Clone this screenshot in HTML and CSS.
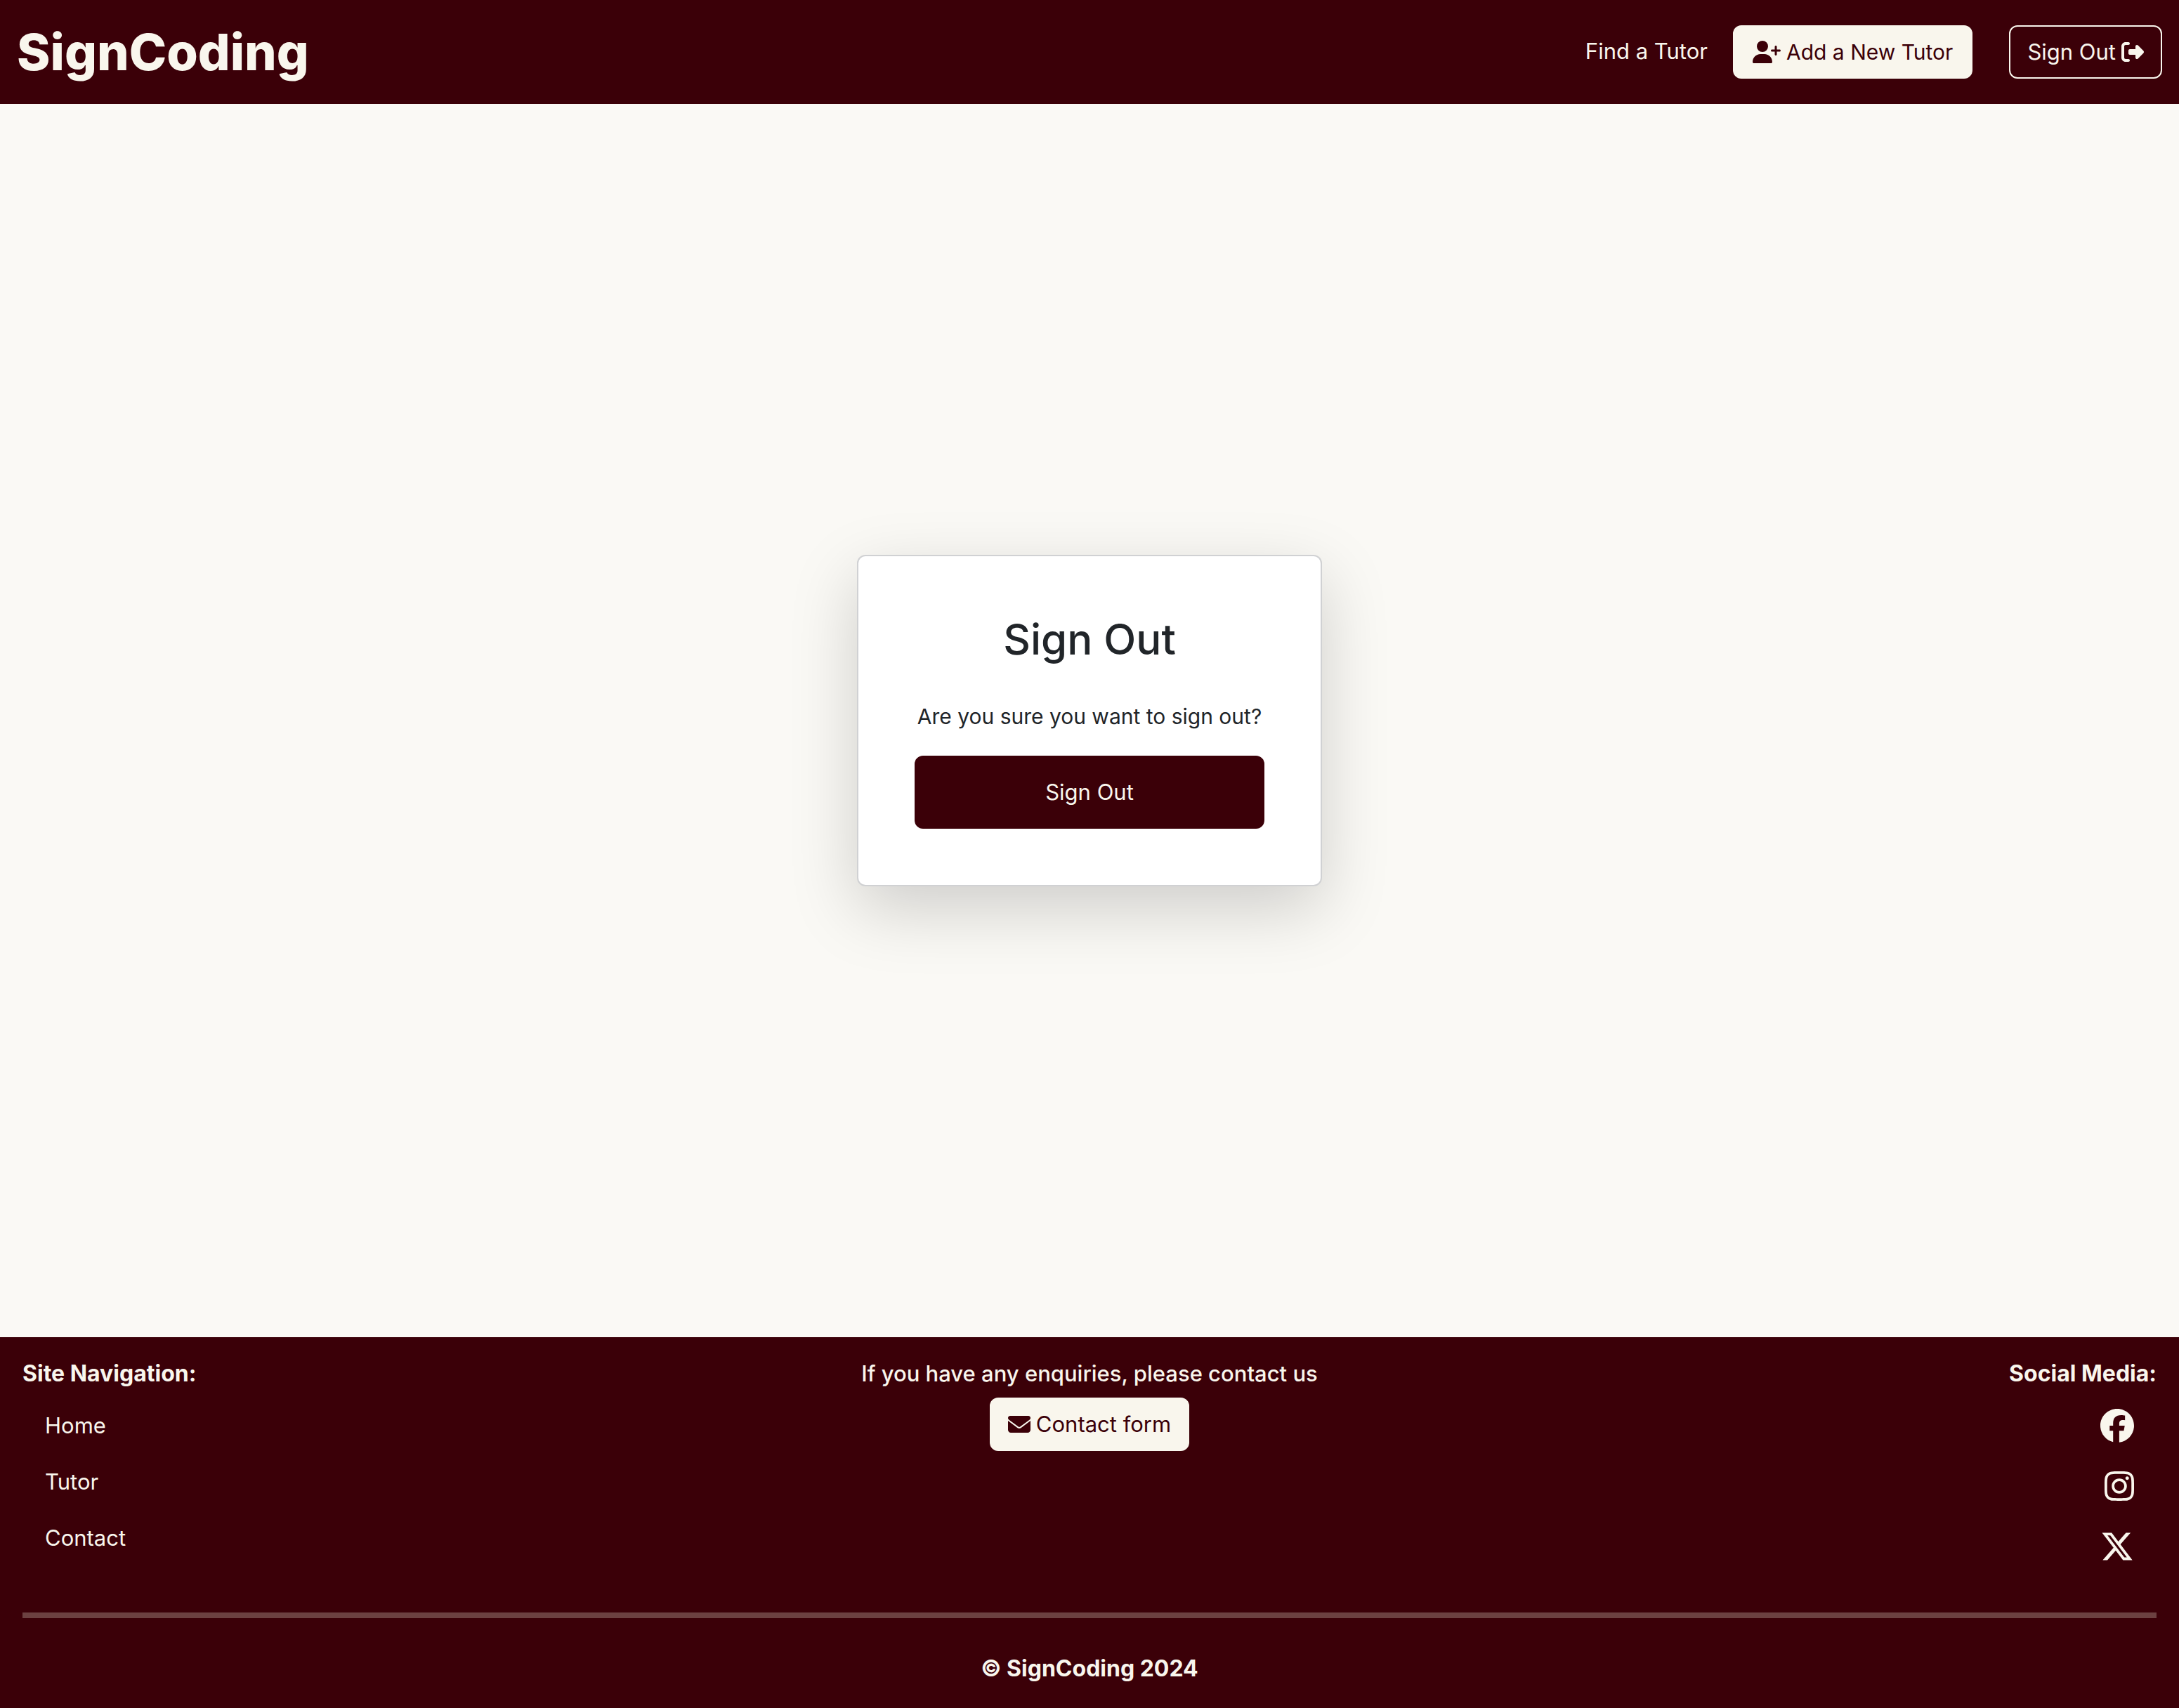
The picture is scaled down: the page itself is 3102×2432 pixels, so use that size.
FILE: index.html
```html
<!DOCTYPE html>
<html lang="en">
<head>
  <meta charset="utf-8">
  <title>Sign Out - SignCoding</title>
  <meta name="viewport" content="width=device-width, initial-scale=1">
  <link rel="stylesheet" href="styles.css">
</head>
<body>
  <header class="site-header">
    <a class="brand" href="#">SignCoding</a>
    <nav class="main-nav" aria-label="Main">
      <a class="nav-link" href="#">Find a Tutor</a>
      <a class="btn btn-light btn-add" href="#">
        <svg class="icon icon-wide" viewBox="0 0 640 512" aria-hidden="true"><path d="M96 128a128 128 0 1 1 256 0A128 128 0 1 1 96 128zM0 482.3C0 383.8 79.8 304 178.3 304h91.4C368.2 304 448 383.8 448 482.3c0 16.4-13.3 29.7-29.7 29.7H29.7C13.3 512 0 498.7 0 482.3zM504 312V248H440c-13.3 0-24-10.7-24-24s10.7-24 24-24h64V136c0-13.3 10.7-24 24-24s24 10.7 24 24v64h64c13.3 0 24 10.7 24 24s-10.7 24-24 24H552v64c0 13.3-10.7 24-24 24s-24-10.7-24-24z"/></svg>
        <span>Add a New Tutor</span>
      </a>
      <a class="btn btn-outline" href="#">
        <span>Sign Out</span>
        <svg class="icon" viewBox="0 0 512 512" aria-hidden="true"><path d="M377.9 105.9L500.7 228.7c7.2 7.2 11.3 17.1 11.3 27.3s-4.1 20.1-11.3 27.3L377.9 406.1c-6.4 6.4-15 9.9-24 9.9c-18.7 0-33.9-15.2-33.9-33.9l0-62.1-128 0c-17.7 0-32-14.3-32-32l0-64c0-17.7 14.3-32 32-32l128 0 0-62.1c0-18.7 15.2-33.9 33.9-33.9c9 0 17.6 3.6 24 9.9zM160 96L96 96c-17.7 0-32 14.3-32 32l0 256c0 17.7 14.3 32 32 32l64 0c17.7 0 32 14.3 32 32s-14.3 32-32 32l-64 0c-53 0-96-43-96-96L0 128C0 75 43 32 96 32l64 0c17.7 0 32 14.3 32 32s-14.3 32-32 32z"/></svg>
      </a>
    </nav>
  </header>

  <main class="content">
    <form class="card">
      <h1 class="card-title">Sign Out</h1>
      <p class="card-text">Are you sure you want to sign out?</p>
      <button class="btn-submit" type="button">Sign Out</button>
    </form>
  </main>

  <footer class="site-footer">
    <div class="footer-columns">
      <nav class="footer-col" aria-label="Site navigation">
        <h2 class="footer-title">Site Navigation:</h2>
        <ul class="link-list">
          <li><a href="#">Home</a></li>
          <li><a href="#">Tutor</a></li>
          <li><a href="#">Contact</a></li>
        </ul>
      </nav>
      <div class="footer-col footer-contact">
        <p class="footer-text">If you have any enquiries, please contact us</p>
        <a class="btn btn-light" href="#">
          <svg class="icon" viewBox="0 0 512 512" aria-hidden="true"><path d="M48 64C21.5 64 0 85.5 0 112c0 15.1 7.1 29.3 19.2 38.4L236.8 313.6c11.4 8.5 27 8.5 38.4 0L492.8 150.4c12.1-9.1 19.2-23.3 19.2-38.4c0-26.5-21.5-48-48-48H48zM0 176V384c0 35.3 28.7 64 64 64H448c35.3 0 64-28.7 64-64V176L294.4 339.2c-22.8 17.1-54 17.1-76.8 0L0 176z"/></svg>
          <span>Contact form</span>
        </a>
      </div>
      <div class="footer-col footer-social">
        <h2 class="footer-title">Social Media:</h2>
        <ul class="social-list">
          <li><a href="#" aria-label="Facebook"><svg class="social-icon" viewBox="0 0 512 512" aria-hidden="true"><path d="M512 256C512 114.6 397.4 0 256 0S0 114.6 0 256C0 376 82.7 476.8 194.2 504.5V334.2H141.4V256h52.8V222.3c0-87.1 39.4-127.5 125-127.5c16.2 0 44.2 3.2 55.7 6.4V172c-6-.6-16.5-1-29.6-1c-42 0-58.2 15.9-58.2 57.2V256h83.6l-14.4 78.2H287V510.1C413.8 494.8 512 386.9 512 256h0z"/></svg></a></li>
          <li><a href="#" aria-label="Instagram"><svg class="social-icon" viewBox="0 0 448 512" aria-hidden="true"><path d="M224.1 141c-63.6 0-114.9 51.3-114.9 114.9s51.3 114.9 114.9 114.9S339 319.5 339 255.9 287.7 141 224.1 141zm0 189.6c-41.1 0-74.7-33.5-74.7-74.7s33.5-74.7 74.7-74.7 74.7 33.5 74.7 74.7-33.6 74.7-74.7 74.7zm146.4-194.3c0 14.9-12 26.8-26.8 26.8-14.9 0-26.8-12-26.8-26.8s12-26.8 26.8-26.8 26.8 12 26.8 26.8zm76.1 27.2c-1.7-35.9-9.9-67.7-36.2-93.9-26.2-26.2-58-34.4-93.9-36.2-37-2.1-147.9-2.1-184.9 0-35.8 1.7-67.6 9.9-93.9 36.1s-34.4 58-36.2 93.9c-2.1 37-2.1 147.9 0 184.9 1.7 35.9 9.9 67.7 36.2 93.9s58 34.4 93.9 36.2c37 2.1 147.9 2.1 184.9 0 35.9-1.7 67.7-9.9 93.9-36.2 26.2-26.2 34.4-58 36.2-93.9 2.1-37 2.1-147.8 0-184.8zM398.8 388c-7.8 19.6-22.9 34.7-42.6 42.6-29.5 11.7-99.5 9-132.1 9s-102.7 2.6-132.1-9c-19.6-7.8-34.7-22.9-42.6-42.6-11.7-29.5-9-99.5-9-132.1s-2.6-102.7 9-132.1c7.8-19.6 22.9-34.7 42.6-42.6 29.5-11.7 99.5-9 132.1-9s102.7-2.6 132.1 9c19.6 7.8 34.7 22.9 42.6 42.6 11.7 29.5 9 99.5 9 132.1s2.7 102.7-9 132.1z"/></svg></a></li>
          <li><a href="#" aria-label="X"><svg class="social-icon" viewBox="0 0 512 512" aria-hidden="true"><path d="M389.2 48h70.6L305.6 224.2 487 464H345L233.7 318.6 106.5 464H35.8L200.7 275.5 26.8 48H172.4L272.9 180.9 389.2 48zM364.4 421.8h39.1L151.1 88h-42L364.4 421.8z"/></svg></a></li>
        </ul>
      </div>
    </div>
    <hr class="divider">
    <p class="copyright">© SignCoding 2024</p>
  </footer>
</body>
</html>
```
FILE: styles.css
```css
:root {
  --maroon: #3b0008;
  --cream: #f9f6ed;
  --page: #faf9f5;
  --ink: #212529;
}

* {
  box-sizing: border-box;
}

body {
  display: flex;
  flex-direction: column;
  min-height: 100vh;
  margin: 0;
  background: var(--page);
  color: var(--ink);
  font-family: Inter, "Liberation Sans", sans-serif;
  font-size: 31px;
  line-height: 48px;
}

a {
  color: inherit;
  text-decoration: none;
}

h1, h2, p, ul {
  margin: 0;
  padding: 0;
}

ul {
  list-style: none;
}

/* Header */
.site-header {
  display: flex;
  align-items: center;
  justify-content: space-between;
  padding: 36px 24px;
  background: var(--maroon);
  color: var(--cream);
}

.brand {
  font-size: 72px;
  font-weight: 800;
  line-height: 76px;
}

.main-nav {
  display: flex;
  align-items: center;
}

.nav-link {
  padding: 0 36px 2px;
}

/* Buttons */
.btn {
  display: inline-flex;
  align-items: center;
  gap: 8px;
  padding: 12px 24px;
  border: 2px solid var(--cream);
  border-radius: 12px;
  white-space: nowrap;
}

.btn-light {
  background: var(--cream);
  color: var(--maroon);
}

.btn-add {
  margin-right: 52px;
  padding: 12px 26px;
  font-size: 30px;
}

.icon {
  width: 32px;
  height: 32px;
  fill: currentColor;
}

.icon-wide {
  width: 40px;
}

/* Sign out card */
.content {
  display: flex;
  flex: 1;
  align-items: center;
  justify-content: center;
}

.card {
  display: flex;
  flex-direction: column;
  min-width: 662px;
  padding: 80px;
  border: 2px solid #d0d1d3;
  border-radius: 12px;
  background: #fff;
  box-shadow: 0 32px 96px rgba(0, 0, 0, 0.175);
  text-align: center;
}

.card-title {
  margin-bottom: 48px;
  font-size: 60px;
  font-weight: 500;
  line-height: 76px;
}

.card-text {
  margin-bottom: 32px;
  font-size: 30px;
}

.btn-submit {
  padding: 28px 24px;
  border: 0;
  border-radius: 12px;
  background: var(--maroon);
  color: var(--cream);
  font: inherit;
}

/* Footer */
.site-footer {
  padding: 28px 32px 32px;
  background: var(--maroon);
  color: var(--cream);
}

.footer-columns {
  display: grid;
  grid-template-columns: 1fr auto 1fr;
}

.footer-title {
  margin-bottom: 10px;
  font-size: 32px;
  font-weight: 700;
}

.footer-contact {
  text-align: center;
}

.footer-text {
  margin-bottom: 10px;
  font-weight: 500;
}

.footer-social {
  text-align: right;
}

.link-list a {
  display: inline-block;
  padding: 16px 32px;
}

.social-list {
  display: flex;
  flex-direction: column;
  align-items: flex-end;
  gap: 6px;
}

.social-list a {
  display: block;
  padding: 16px 32px;
}

.social-icon {
  display: block;
  height: 48px;
  fill: currentColor;
}

.divider {
  height: 8px;
  margin: 54px 0 48px;
  border: 0;
  background: #6c4141;
}

.copyright {
  font-size: 32px;
  font-weight: 700;
  text-align: center;
}
```
